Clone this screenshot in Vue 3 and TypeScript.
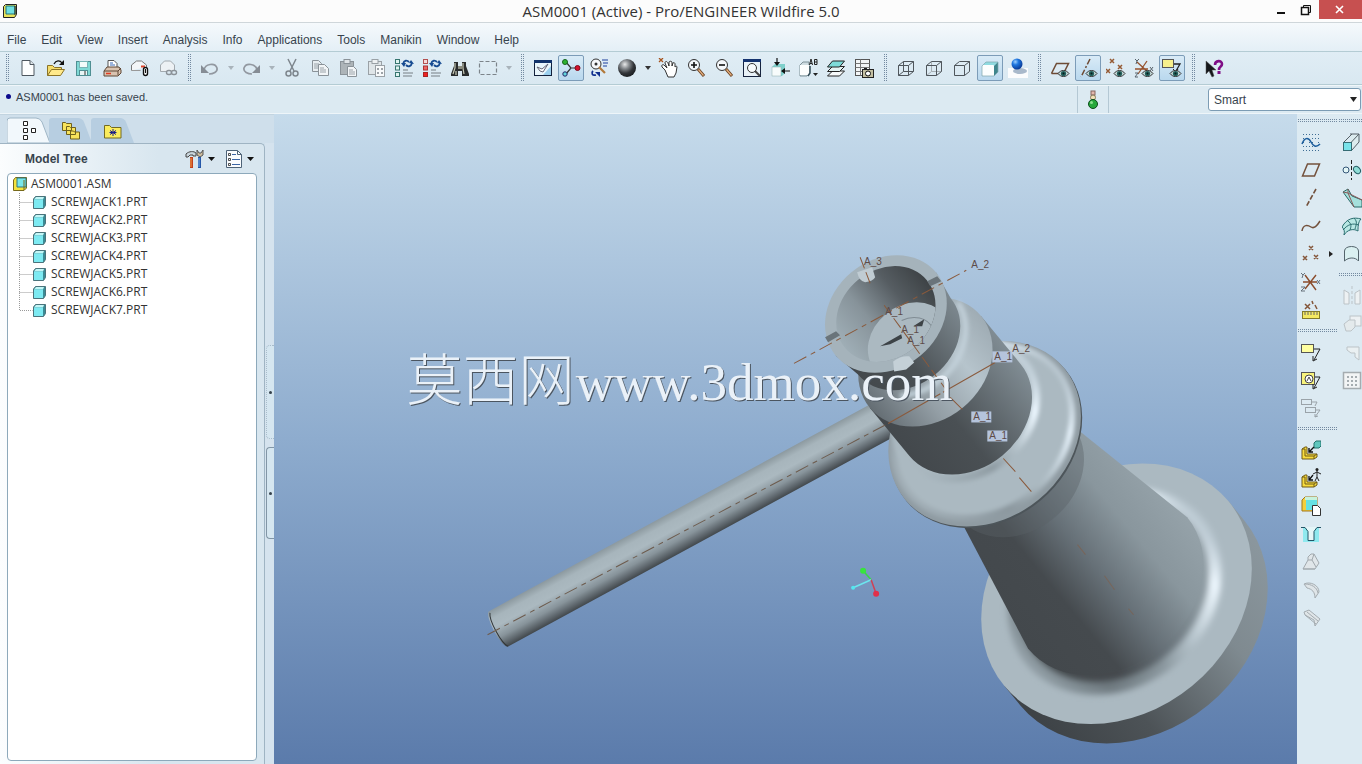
<script setup lang="ts">
import { ref } from 'vue'

interface Tool {
  id: string
  label: string
  active?: boolean
  disabled?: boolean
  caret?: boolean
}

const icons: Record<string, string> = {
  new: '<path d="M4 2.5h8l4 4v11H4z" fill="#fdfefe" stroke="#4d565e"/><path d="M12 2.5v4h4" fill="#dfe6ea" stroke="#4d565e"/>',
  open: '<path d="M1.500 17.500V7.500h5l2 2h7v3" fill="#f4dc6c" stroke="#8b7326"/><path d="M1.500 17.500l4-6h13l-4 6z" fill="#ffe98a" stroke="#8b7326"/><path d="M8 6c2-4 6-4 8-1" fill="none" stroke="#111" stroke-width="1.300"/><path d="M18 2v5h-5z" fill="#111"/>',
  save: '<rect x="2.500" y="3.500" width="14" height="14" fill="#7fd8d5" stroke="#4f8f93"/><rect x="5.500" y="3.500" width="8" height="6" fill="#f4fbfb" stroke="#7ab4b6"/><rect x="5.500" y="12.500" width="8" height="5" fill="#e8f6f6" stroke="#4f8f93"/><path d="M11 13v4" stroke="#333"/>',
  print: '<path d="M6 9V2.500h6l3 3V9" fill="#fff" stroke="#555"/><path d="M8 5h3M8 7h5" stroke="#3a6ab8"/><path d="M2 13l3-4h12l2 3v3l-3 3H2z" fill="#d9c3b0" stroke="#5e4635"/><path d="M2 13h14l3-3M16 13v4" stroke="#5e4635" fill="none"/><path d="M4 15.500h5" stroke="#e13b20" stroke-width="1.500"/>',
  mail: '<path d="M1.500 12.500V7l5-4h5l5 4v2" fill="#f3f6f8" stroke="#777"/><path d="M1.500 12.500h9" fill="none" stroke="#999"/><path d="M11 8.500h4" stroke="#d8432b" stroke-width="2"/><rect x="13.500" y="9.500" width="4" height="8" rx="2" fill="#fff" stroke="#111" stroke-width="1.400"/><path d="M15.500 11v4" stroke="#111"/>',
  link: '<path d="M2.500 13.500V7l4-4h6l4 4v6" fill="#edf1f4" stroke="#a2a9ae"/><path d="M2.500 13.500h6" fill="none" stroke="#a2a9ae"/><rect x="8.500" y="12.500" width="5" height="4" rx="2" fill="none" stroke="#8b9298" stroke-width="1.400"/><rect x="13.500" y="12.500" width="5" height="4" rx="2" fill="none" stroke="#8b9298" stroke-width="1.400"/>',
  undo: '<path d="M4 12C5 6 15 4 17 10c1 4-4 6-8 6" fill="none" stroke="#9298a0" stroke-width="1.700"/><path d="M1 7v8h8z" fill="#868d95"/>',
  redo: '<path d="M16 12C15 6 5 4 3 10c-1 4 4 6 8 6" fill="none" stroke="#9298a0" stroke-width="1.700"/><path d="M19 7v8h-8z" fill="#868d95"/>',
  cut: '<path d="M6 1l6 12M14 1L8 13" stroke="#7e868d" stroke-width="1.500"/><circle cx="6.500" cy="15.500" r="2.500" fill="none" stroke="#7e868d" stroke-width="1.500"/><circle cx="13.500" cy="15.500" r="2.500" fill="none" stroke="#7e868d" stroke-width="1.500"/>',
  copy: '<path d="M2.500 2.500h6l3 3v8h-9z" fill="#e8eef1" stroke="#8a9298"/><path d="M4 6h5M4 8h5M4 10h4" stroke="#9aa2a8"/><path d="M8.500 6.500h6l4 4v7h-10z" fill="#f2f5f7" stroke="#8a9298"/><path d="M10 10h4M10 12h6M10 14h6" stroke="#9aa2a8"/>',
  paste: '<rect x="2.500" y="3.500" width="13" height="13" fill="#adb4b8" stroke="#8a9298"/><rect x="6" y="1.500" width="6" height="4" fill="#dfe4e7" stroke="#8a9298"/><path d="M9.500 8.500h6l3 3v7h-9z" fill="#f2f5f7" stroke="#8a9298"/><path d="M11 12h4M11 14h6M11 16h6" stroke="#9aa2a8"/>',
  pasteList: '<rect x="2.500" y="3.500" width="13" height="13" fill="#dfe5e8" stroke="#9aa1a6"/><rect x="6" y="1.500" width="6" height="4" fill="#eef1f3" stroke="#9aa1a6"/><rect x="9.500" y="7.500" width="9" height="11" fill="#f8fafb" stroke="#9aa1a6"/><path d="M11 11h2M15 11h2M11 15h2M15 15h2" stroke="#7f878d" stroke-width="1.600"/>',
  regen: '<g fill="#dff3f0" stroke="#37756f"><rect x="1.500" y="1.500" width="4" height="4"/><rect x="1.500" y="8" width="4" height="4"/><rect x="1.500" y="14.500" width="4" height="4"/></g><path d="M9 12h5M9 15h10M9 18h9" stroke="#777e84"/><path d="M9 6c1-4 4-4 6-2M18 5c-1 4-4 4-6 2" fill="none" stroke="#164a91" stroke-width="1.800"/><path d="M7 5h5l-2 4zM15 5l2-3 3 4z" fill="#164a91"/>',
  regenMgr: '<rect x="1.500" y="1.500" width="4" height="4" fill="#f6dada" stroke="#b35050"/><rect x="1.500" y="8" width="4" height="4" fill="#e66" stroke="#a33"/><rect x="1.500" y="14.500" width="4" height="4" fill="#e22" stroke="#a22"/><path d="M9 12h5M9 15h10M9 18h9" stroke="#777e84"/><path d="M9 6c1-4 4-4 6-2M18 5c-1 4-4 4-6 2" fill="none" stroke="#164a91" stroke-width="1.800"/><path d="M7 5h5l-2 4zM15 5l2-3 3 4z" fill="#164a91"/>',
  find: '<path d="M4 4h4v4h4V4h4v4l3 8v2h-7v-5H8v5H1v-2l3-8z" fill="#2a2c2c"/><path d="M5 5v5l-2 6M13 5v5l1 6M6 13v4" stroke="#c9cbb8" stroke-width="1.200" fill="none"/><rect x="8" y="8" width="4" height="3" fill="#8b8d80"/>',
  select: '<rect x="1.500" y="3.500" width="17" height="13" fill="none" stroke="#7c848a" stroke-width="1.200" stroke-dasharray="4 2"/>',
  repaint: '<rect x="1.500" y="2.500" width="17" height="15" fill="#eaf6fc" stroke="#13213c"/><rect x="1" y="2" width="18" height="3" fill="#13336b"/><path d="M18 17H10L18 8z" fill="#9cd0ee"/><path d="M4 9l5 2 6-5-5 8-3-1z" fill="#fff" stroke="#667"/>',
  spin: '<path d="M5 4l5 6-5 6M10 10h7" fill="none" stroke="#333" stroke-width="1.200"/><circle cx="4" cy="4" r="2.500" fill="#2cb22f" stroke="#14631a"/><circle cx="16.500" cy="10" r="2.500" fill="#d3122d" stroke="#7f0b1b"/><circle cx="4" cy="16" r="2.200" fill="#63d8dc" stroke="#226"/>',
  orient: '<circle cx="7" cy="6" r="5" fill="#f6f8fb" stroke="#333"/><circle cx="7" cy="6" r="1.500" fill="#333"/><path d="M10 9l6 6" stroke="#b2793a" stroke-width="2.200"/><path d="M13 2h6M14 5h5M14 8h4" stroke="#1c3f9c"/><path d="M4 13c-2 2-1 5 3 4" fill="none" stroke="#102f8e" stroke-width="1.800"/><path d="M6 14h5v5z" fill="#102f8e"/>',
  sphere: '<defs><radialGradient id="ball" cx=".38" cy=".3" r=".7"><stop offset="0" stop-color="#e8e9ea"/><stop offset=".35" stop-color="#85898d"/><stop offset=".7" stop-color="#33363a"/><stop offset="1" stop-color="#1d2023"/></radialGradient></defs><circle cx="10" cy="10" r="9" fill="url(#ball)"/>',
  hand: '<path d="M7 12L4 9c-1-2 1-3 2-2l3 3L7 5c0-2 2-2 3 0l1 3V4c1-1 2-1 3 0v4l1-3c1-1 2 0 2 1v3c1-1 2-1 2 0l-1 6-2 4h-6z" fill="#fff" stroke="#333"/><path d="M1 0l4 4M5 0L1 4" stroke="#a6531d" stroke-width="1.300"/>',
  zoomIn: '<circle cx="8" cy="7" r="5.500" fill="#f4f7fa" stroke="#333"/><path d="M8 4v6M5 7h6" stroke="#111" stroke-width="1.600"/><path d="M12 11l6 7" stroke="#69401f" stroke-width="3"/><path d="M12.500 11.500l5 6" stroke="#e6b182" stroke-width="1.200"/>',
  zoomOut: '<circle cx="8" cy="7" r="5.500" fill="#f4f7fa" stroke="#333"/><path d="M5 7h6" stroke="#111" stroke-width="1.600"/><path d="M12 11l6 7" stroke="#69401f" stroke-width="3"/><path d="M12.500 11.500l5 6" stroke="#e6b182" stroke-width="1.200"/>',
  refit: '<rect x="1.500" y="2.500" width="17" height="16" fill="#e9f2f8" stroke="#16233e"/><rect x="1" y="1" width="18" height="3" fill="#15336f"/><circle cx="10" cy="10" r="4.500" fill="#f8fbfd" stroke="#333"/><path d="M13 13l5 5" stroke="#444" stroke-width="2"/>',
  reorient: '<path d="M2 9l3-3h10v9l-3 3H2z" fill="#7fd0cc"/><rect x="2" y="9" width="9" height="9" fill="#f7fbfb" stroke="#8aa" stroke-width=".5"/><path d="M7 0v5M20 13h-5" stroke="#111" stroke-width="1.200"/><path d="M4 4h6l-3 4zM15 10v6l-4-3z" fill="#111"/>',
  views: '<path d="M2 7l3-3h6v10l-2 4H2z" fill="#d0dde2" stroke="#7d9097"/><rect x="2" y="7" width="9" height="10" fill="#fdfefe"/><path d="M12 8v7l-2 3" stroke="#344c57" fill="none" stroke-width="1.500"/><path d="M11.500 7L13 1l1.500 6M12 5.500h2" stroke="#222" fill="none"/><path d="M16.500 1.500v5h2.500v-5zM16.500 4H19" stroke="#222" fill="none"/><path d="M15 15h5l-2.500 3z" fill="#222"/>',
  layers: '<g stroke="#222" stroke-linejoin="round"><path d="M1.500 18l5-5h12l-5 5z" fill="#f7fafb"/><path d="M1.500 13.500l5-5h12l-5 5z" fill="#e4f3f3"/><path d="M1.500 9l5-6h12l-5 6z" fill="#7ddbd8"/></g>',
  viewMgr: '<rect x="1.500" y="1.500" width="14" height="16" fill="#f4f6f7" stroke="#555"/><path d="M1.500 5.500h14M1.500 9.500h14M1.500 13.500h14M6.500 1.500v16" stroke="#777"/><rect x="8.500" y="11.500" width="11" height="8" fill="#c4c0a2" stroke="#222"/><rect x="10" y="10" width="3" height="2" fill="#222"/><circle cx="14" cy="15.500" r="2.500" fill="#fff" stroke="#111"/>',
  wire: '<path d="M2.500 7.500h10v10h-10zM7.500 3.500h10v10h-10zM2.500 7.500l5-4M12.500 7.500l5-4M2.500 17.500l5-4M12.500 17.500l5-4" fill="none" stroke="#4f565c"/>',
  hidden: '<path d="M7.500 3.500v10h10M2.500 17.500l5-4" fill="none" stroke="#a6aeb3"/><path d="M2.500 7.500h10v10h-10zM2.500 7.500l5-4h10v10l-5 4M12.500 7.500l5-4" fill="none" stroke="#4f565c"/>',
  noHidden: '<path d="M2.500 7.500h10v10h-10zM2.500 7.500l5-4h10v10l-5 4M12.500 7.500l5-4" fill="none" stroke="#4f565c"/>',
  shaded: '<path d="M2 8l4-4h12l-4 4z" fill="#8fdbe0"/><path d="M14 8l4-4v10l-4 4z" fill="#3f868d"/><rect x="2" y="7" width="12" height="11" rx="1" fill="#fbfefe"/><path d="M2 18V8l4-4h12v10l-4 4z" fill="none" stroke="#7fa6ae" stroke-width=".7"/>',
  enhanced: '<defs><radialGradient id="blueBall" cx=".35" cy=".3" r=".7"><stop offset="0" stop-color="#9fd0ff"/><stop offset=".4" stop-color="#1f77e0"/><stop offset="1" stop-color="#0a3c99"/></radialGradient></defs><rect x="0" y="10" width="20" height="10" fill="#fbfcfd"/><ellipse cx="12" cy="13" rx="7" ry="3" fill="#a9b9cb"/><circle cx="9" cy="6" r="5.500" fill="url(#blueBall)"/>',
  planeEye: '<path d="M1.500 15.500l5-10h12l-4 8" fill="none" stroke="#6e4b35" stroke-width="1.500"/><path d="M1.500 15.500h8" stroke="#6e4b35" stroke-width="1.500"/>',
  axisEye: '<path d="M12 1L3 19" stroke="#6e4b35" stroke-width="1.500" stroke-dasharray="6 2 2 2"/>',
  pointsEye: '<g stroke="#955a34" stroke-width="1.500"><path d="M4 1l4 4M8 1L4 5M12 7l4 4M16 7l-4 4M0 11l4 4M4 11l-4 4"/></g>',
  csysEye: '<path d="M3 4l12 11M1 11h13M13 3L4 16" stroke="#96522e" stroke-width="1.300"/><path d="M1 1l2 2 2-2M3 3l-1 3M16 9l3 4M19 9l-3 4M1 15h3l-3 4h3" stroke="#59636b" fill="none"/>',
  noteEye: '<rect x="0.500" y="1.500" width="11" height="8" fill="#f7f08c" stroke="#555"/><path d="M12 6h6l-4 7" fill="none" stroke="#222" stroke-width="1.300"/><path d="M11 11l3 3 2-3" fill="none" stroke="#222"/>',
  help: '<path d="M2 3v13l3-3 3 6 2-1-2-6h4z" fill="#15171a" stroke="#555" stroke-width=".5"/><path d="M11 7c0-5 7-5 7-1 0 3-3 2-3 6" fill="none" stroke="#7f0e86" stroke-width="2.600"/><rect x="13.500" y="13" width="3" height="3" fill="#7f0e86"/>',
  sketch: '<g fill="#3f6d94"><path d="M2 2h1v1H2zM5 2h1v1H5zM8 2h1v1H8zM11 2h1v1h-1zM14 2h1v1h-1zM17 2h1v1h-1zM2 6h1v1H2zM5 6h1v1H5zM11 6h1v1h-1zM14 6h1v1h-1zM17 6h1v1h-1zM2 10h1v1H2zM8 10h1v1H8zM11 10h1v1h-1zM17 10h1v1h-1zM2 14h1v1H2zM5 14h1v1H5zM8 14h1v1H8zM11 14h1v1h-1zM14 14h1v1h-1zM2 18h1v1H2zM5 18h1v1H5zM8 18h1v1H8zM11 18h1v1h-1zM14 18h1v1h-1zM17 18h1v1h-1z"/></g><path d="M1 12C4 4 8 6 10 10s5 6 9 2" fill="none" stroke="#1e5f9e" stroke-width="1.600"/>',
  plane: '<path d="M1.500 16l5-12h12l-5 12z" fill="none" stroke="#73513c" stroke-width="1.500"/>',
  axis: '<path d="M15 1L5 19" stroke="#73513c" stroke-width="1.600" stroke-dasharray="5 2"/>',
  curve: '<path d="M1 15c1-7 6-6 9-4s6-1 9-6" fill="none" stroke="#73513c" stroke-width="1.500"/>',
  points: '<g stroke="#84563a" stroke-width="1.500"><path d="M8 2l4 4M12 2L8 6M2 12l4 4M6 12l-4 4M13 11l4 4M17 11l-4 4"/></g>',
  csys: '<path d="M4 3l11 15M2 10h14M15 3L4 17" stroke="#8b4c2c" stroke-width="1.400"/><path d="M0 1l2 2 2-2M2 3l-1 3M16 8l3 4M19 8l-3 4M0 15h4l-4 4h4" stroke="#66707a" fill="none"/>',
  measure: '<path d="M4 4l5 5M9 4L4 9M11 1l1 3M14 5l2 4" stroke="#84563a" stroke-width="1.500"/><rect x="1.500" y="11.500" width="17" height="7" fill="#f4ea62" stroke="#837c2a"/><path d="M4 12v3M7 12v3M10 12v3M13 12v3M16 12v3" stroke="#666"/>',
  note: '<rect x="0.500" y="2.500" width="12" height="8" fill="#ffffa0" stroke="#555"/><path d="M13 7h6l-6 11" fill="none" stroke="#222"/><path d="M12 14v5l4-2" fill="none" stroke="#222"/>',
  noteBalloon: '<rect x="0.500" y="2.500" width="13" height="12" fill="#f8f37c" stroke="#555"/><circle cx="8" cy="9" r="4" fill="#fff" stroke="#444"/><path d="M6 11l2-4 2 4" stroke="#444" fill="none"/><path d="M14 7h5l-6 11M12 14v5l4-2" fill="none" stroke="#222"/>',
  noteStack: '<g fill="none" stroke="#9aa3a9"><rect x="0.500" y="1.500" width="10" height="5"/><rect x="4.500" y="9.500" width="10" height="5"/><path d="M11 4h5l-2 4M15 12h4l-5 7M14 16v3l3-1"/></g>',
  addPart: '<path d="M1 9l3-2h2v7h10v3l-3 2H1z" fill="#f8dc3d" stroke="#6f5b16"/><path d="M1 9h3v7h9v3M13 16l3-2" fill="none" stroke="#6f5b16"/><path d="M13 3l2-2h5v5l-2 2h-5z" fill="#5fc6bd" stroke="#25736d"/><path d="M13 7l-5 5M8 8v4h4" fill="none" stroke="#111" stroke-width="1.400"/>',
  addManikin: '<path d="M1 9l3-2h2v7h10v3l-3 2H1z" fill="#f8dc3d" stroke="#6f5b16"/><path d="M1 9h3v7h9v3M13 16l3-2" fill="none" stroke="#6f5b16"/><path d="M16 2v7l-2 4M16 9l2 4M12 6l4-2 4 2" stroke="#222" fill="none"/><circle cx="16" cy="1.500" r="1.500" fill="#222"/><path d="M12 7l-4 5M8 8v4h4" fill="none" stroke="#111" stroke-width="1.300"/>',
  create: '<path d="M1 4l3-3h12v11l-3 3H1z" fill="#f5cf3e" stroke="#a1791b"/><path d="M5 4h11v8l-3 2H5z" fill="#67e1e4"/><path d="M4 1h12v3H4z" fill="#c7f3dd"/><path d="M11.500 9.500h5l3 3v7h-8z" fill="#fff" stroke="#333"/>',
  hole: '<rect x="2" y="4" width="16" height="14" fill="#8fe9ef"/><path d="M4 3l3 4v9h6V7l3-4" fill="#e5f6f8"/><path d="M0 3.500h4l3 4v9h6v-9l3-4h4" fill="none" stroke="#256"/>',
  extrudeCut: '<path d="M2 17l5-9V5l3-3h3l5 9-4 6zM7 8h4l4 7M13 2l-2 6M2 17h12" fill="#e0e6e9" stroke="#a1a9ae"/>',
  round: '<path d="M3 4c6-3 15 1 15 8l-4 6c0-6-3-9-8-10zM4 4c6 0 12 3 13 9" fill="#dfe5e8" stroke="#a4acb1"/>',
  chamfer: '<path d="M3 4l5-2 11 9-5 7-1-6-9-5zM6 4l11 9M4 7l11 9" fill="#dfe5e8" stroke="#a4acb1"/>',
  extrude: '<path d="M8 2h9v8L10 18" fill="#dcebee" stroke="#555f66"/><path d="M1.500 10.500L10 2M9 10.500L17 2" stroke="#555f66"/><rect x="1.500" y="10.500" width="8" height="8" fill="#79e3ea" stroke="#356c74"/>',
  revolve: '<path d="M9.500 0v20" stroke="#222" stroke-dasharray="4 2"/><circle cx="4" cy="10" r="3" fill="#e3f6f6" stroke="#357"/><ellipse cx="15" cy="10" rx="4" ry="3" transform="rotate(50 15 10)" fill="#8fdcd6" stroke="#265f66"/>',
  sweep: '<path d="M1 4l5-3 4 7 10 4v7h-8z" fill="#a5e0dc" stroke="#286a68"/><path d="M6 5l6 14M6 5l14 7M1 4l5 1V1" fill="none" stroke="#8a5a5a"/>',
  boundary: '<path d="M0 11C5 2 12 1 19 3c-3 3-3 8-3 12C11 12 5 14 2 19 3 15 2 13 0 11z" fill="#b8e8e4" stroke="#2b6e70"/><path d="M6 5c4 3 3 6 2 9M12 2c4 4 2 7 1 11M1 14c5-6 10-7 16-5" fill="none" stroke="#2b6e70"/>',
  fill: '<path d="M2.500 17V7c0-6 14-6 14 0v10c-3-4-10-4-14 0z" fill="#daf0f1" stroke="#54646c"/>',
  mirror: '<path d="M10 0v20" stroke="#bcc3c7" stroke-dasharray="3 2"/><path d="M2 4l5 3v11H2zM18 4l-5 3v11h5z" fill="#edf1f3" stroke="#bcc3c7"/>',
  merge: '<rect x="8" y="2" width="11" height="10" fill="#edf1f3" stroke="#bcc3c7"/><path d="M2 10l5-4h6v7l-4 4H4z" fill="#e4eaec" stroke="#bcc3c7"/>',
  trim: '<path d="M5 5h12v13l-4-3v-4H9L5 8z" fill="#eaf0f2" stroke="#bcc3c7"/>',
  pattern: '<rect x="1.500" y="2.500" width="17" height="16" fill="#f2f4f5" stroke="#a5acb0" stroke-width="1.500"/><g fill="#a5acb0"><path d="M5 6h2v2H5zM9 6h2v2H9zM13 6h2v2h-2zM5 10h2v2H5zM9 10h2v2H9zM13 10h2v2h-2zM5 14h2v2H5zM9 14h2v2H9zM13 14h2v2h-2z"/></g>',
}

const eye =
  '<path d="M8 15.500c3-4 8-4 11 0-3 4-8 4-11 0z" fill="#c3d6d6" stroke="#333"/><circle cx="13.500" cy="15.500" r="2.600" fill="#23605c"/><circle cx="13.500" cy="15.500" r="1" fill="#071c1c"/>'
for (const id of ['planeEye', 'axisEye', 'pointsEye', 'csysEye', 'noteEye']) icons[id] += eye

const menus = ['File', 'Edit', 'View', 'Insert', 'Analysis', 'Info', 'Applications', 'Tools', 'Manikin', 'Window', 'Help']

const toolGroups: Tool[][] = [
  [
    { id: 'new', label: 'New' },
    { id: 'open', label: 'Open' },
    { id: 'save', label: 'Save' },
    { id: 'print', label: 'Print' },
    { id: 'mail', label: 'Mail as attachment' },
    { id: 'link', label: 'Mail link', disabled: true },
  ],
  [
    { id: 'undo', label: 'Undo', disabled: true, caret: true },
    { id: 'redo', label: 'Redo', disabled: true, caret: true },
    { id: 'cut', label: 'Cut', disabled: true },
    { id: 'copy', label: 'Copy', disabled: true },
    { id: 'paste', label: 'Paste', disabled: true },
    { id: 'pasteList', label: 'Paste special', disabled: true },
    { id: 'regen', label: 'Regenerate' },
    { id: 'regenMgr', label: 'Regeneration manager' },
    { id: 'find', label: 'Find' },
    { id: 'select', label: 'Select box', disabled: true, caret: true },
  ],
  [
    { id: 'repaint', label: 'Repaint' },
    { id: 'spin', label: 'Spin center', active: true },
    { id: 'orient', label: 'Orient mode' },
    { id: 'sphere', label: 'Appearance gallery', caret: true },
    { id: 'hand', label: 'Pan' },
    { id: 'zoomIn', label: 'Zoom in' },
    { id: 'zoomOut', label: 'Zoom out' },
    { id: 'refit', label: 'Refit' },
    { id: 'reorient', label: 'Reorient' },
    { id: 'views', label: 'Saved views' },
    { id: 'layers', label: 'Layers' },
    { id: 'viewMgr', label: 'View manager' },
  ],
  [
    { id: 'wire', label: 'Wireframe' },
    { id: 'hidden', label: 'Hidden line' },
    { id: 'noHidden', label: 'No hidden' },
    { id: 'shaded', label: 'Shading', active: true },
    { id: 'enhanced', label: 'Enhanced realism' },
  ],
  [
    { id: 'planeEye', label: 'Plane display' },
    { id: 'axisEye', label: 'Axis display', active: true },
    { id: 'pointsEye', label: 'Point display' },
    { id: 'csysEye', label: 'Coordinate system display' },
    { id: 'noteEye', label: 'Annotation display', active: true },
  ],
  [{ id: 'help', label: 'Context help' }],
]

const sideLeft = [
  ['sketch', 'plane', 'axis', 'curve', 'points', 'csys', 'measure'],
  ['note', 'noteBalloon', 'noteStack'],
  ['addPart', 'addManikin', 'create', 'hole', 'extrudeCut', 'round', 'chamfer'],
]
const sideRight = [
  ['extrude', 'revolve', 'sweep', 'boundary', 'fill'],
  ['mirror', 'merge', 'trim', 'pattern'],
]

const parts = [1, 2, 3, 4, 5, 6, 7].map((n) => `SCREWJACK${n}.PRT`)
const filter = ref('Smart')

const axisLabels = [
  { x: 864, y: 266, t: 'A_3' },
  { x: 971, y: 269, t: 'A_2' },
  { x: 885, y: 316, t: 'A_1' },
  { x: 901, y: 334, t: 'A_1' },
  { x: 907, y: 345, t: 'A_1' },
  { x: 1012, y: 353, t: 'A_2' },
  { x: 994, y: 361, t: 'A_1', box: true },
  { x: 973, y: 421, t: 'A_1', box: true },
  { x: 989, y: 440, t: 'A_1', box: true },
]
</script>

<template>
  <div class="app">
    <header class="titlebar">
      <svg class="app-icon" width="16" height="16" viewBox="0 0 16 16" aria-hidden="true">
        <path d="M1.500 3.500l2-2h11v10l-2 3h-11z" fill="#e9e25a" stroke="#222" />
        <path d="M4 3h9v8H4z" fill="#6fe0e2" stroke="#277" />
        <path d="M13 3v9" stroke="#222" />
      </svg>
      <h1>ASM0001 (Active) - Pro/ENGINEER Wildfire 5.0</h1>
      <div class="window-buttons">
        <button aria-label="Minimize"><svg width="12" height="12"><path d="M2 9h8" stroke="#111" stroke-width="2" /></svg></button>
        <button aria-label="Restore">
          <svg width="12" height="12" fill="none" stroke="#111"><path d="M1.500 3.500h7v7h-7z" stroke-width="1.500" /><path d="M3.500 3V1.500h7v7H9" /></svg>
        </button>
        <button class="close" aria-label="Close"><svg width="10" height="10"><path d="M1 1l7 7M8 1L1 8" stroke="#fff" stroke-width="1.600" /></svg></button>
      </div>
    </header>

    <nav class="menubar">
      <button v-for="m in menus" :key="m">{{ m }}</button>
    </nav>

    <div class="toolbar" role="toolbar" aria-label="Main">
      <template v-for="(group, g) in toolGroups" :key="g">
        <span class="grip"></span>
        <template v-for="tool in group" :key="tool.id">
          <button class="tool" :class="{ active: tool.active }" :aria-label="tool.label" :disabled="tool.disabled">
            <svg width="20" height="20" viewBox="0 0 20 20" v-html="icons[tool.id]"></svg>
          </button>
          <button v-if="tool.caret" class="caret" :aria-label="tool.label + ' options'" :disabled="tool.disabled">
            <svg width="6" height="4" viewBox="0 0 6 4"><path d="M0 0h6L3 4z" fill="currentColor" /></svg>
          </button>
        </template>
      </template>
    </div>

    <div class="message-row">
      <p><i class="bullet"></i>ASM0001 has been saved.</p>
      <div class="signal">
        <svg width="12" height="20" viewBox="0 0 12 20" aria-hidden="true">
          <rect x="4" y="1" width="4" height="4" fill="#e3b6ac" stroke="#85665f" />
          <circle cx="6" cy="7.500" r="2.500" fill="#f2e0b8" stroke="#887958" />
          <circle cx="6" cy="14" r="4.500" fill="#27a83b" stroke="#0c4d1c" />
          <circle cx="4.500" cy="12.500" r="1.500" fill="#8be08e" />
        </svg>
      </div>
      <div class="filter">
        <select v-model="filter" aria-label="Selection filter">
          <option>Smart</option>
        </select>
        <svg width="7" height="5" viewBox="0 0 7 5" aria-hidden="true"><path d="M0 0h7L3.500 5z" fill="#222" /></svg>
      </div>
    </div>

    <main class="workspace">
      <aside class="navigator">
        <div class="tabs" role="tablist">
          <button class="tab current" role="tab" aria-label="Model tree">
            <svg class="tab-shape" viewBox="0 0 44 26" preserveAspectRatio="none"><path d="M0 26V4q0-3 3-3h26q4 0 6 4l8 21z" /></svg>
            <svg class="tab-icon" width="20" height="20" viewBox="0 0 20 20" fill="#fff" stroke="#222">
              <path d="M4.500 1.500h4v4h-4zM4.500 8.500h4v4h-4zM4.500 15.500h4v4h-4zM12.500 8.500h4v4h-4z" />
            </svg>
          </button>
          <button class="tab" role="tab" aria-label="Folder browser">
            <svg class="tab-shape" viewBox="0 0 44 26" preserveAspectRatio="none"><path d="M0 26V4q0-3 3-3h26q4 0 6 4l8 21z" /></svg>
            <svg class="tab-icon" width="20" height="20" viewBox="0 0 20 20" fill="#f8e35b" stroke="#6e601c">
              <path d="M1.500 10.500v-8h3l1 1h5v7zM5.500 14.500v-8h3l1 1h5v7zM9.500 19v-8h3l1 1h5v7z" />
            </svg>
          </button>
          <button class="tab" role="tab" aria-label="Favorites">
            <svg class="tab-shape" viewBox="0 0 44 26" preserveAspectRatio="none"><path d="M0 26V4q0-3 3-3h26q4 0 6 4l8 21z" /></svg>
            <svg class="tab-icon" width="20" height="20" viewBox="0 0 20 20">
              <path d="M1.500 18V5.500h5l2 2h9.500V18z" fill="#fbec5c" stroke="#746a22" />
              <path d="M10 9v7M7 10.500l6 4M13 10.500l-6 4M6.500 12.500h7" stroke="#1b1e87" />
            </svg>
          </button>
        </div>
        <section class="panel">
          <div class="panel-head">
            <h2>Model Tree</h2>
            <button aria-label="Settings">
              <svg width="20" height="20" viewBox="0 0 20 20">
                <path d="M1 8V5c3-3 8-3 10-1v3H8V6H5L3 8z" fill="#c9d5dc" stroke="#444" />
                <path d="M6.500 8v11" stroke="#c1401d" stroke-width="3" /><path d="M6 9v9" stroke="#f5a04a" />
                <path d="M14.500 8v11" stroke="#2557a8" stroke-width="3" /><path d="M14 9v9" stroke="#7fb2ee" />
                <path d="M12 1v5l3 2 3-2V1l-2 3h-2z" fill="#cdbc9d" stroke="#555" />
              </svg>
            </button>
            <button class="drop" aria-label="Settings menu"><svg width="7" height="4"><path d="M0 0h7L3.500 4z" fill="#111" /></svg></button>
            <button aria-label="Show">
              <svg width="20" height="20" viewBox="0 0 20 20">
                <path d="M2.500 1.500h11l4 4v13h-15z" fill="#fafcfe" stroke="#4d6277" />
                <path d="M13.500 1.500v4h4" fill="none" stroke="#4d6277" />
                <path d="M8 5.500h4M8 10.500h8M8 15.500h8" stroke="#3c66a5" />
                <path d="M4.500 4.500h2v2h-2zM4.500 9.500h2v2h-2zM4.500 14.500h2v2h-2z" fill="none" stroke="#222" stroke-width=".8" />
              </svg>
            </button>
            <button class="drop" aria-label="Show menu"><svg width="7" height="4"><path d="M0 0h7L3.500 4z" fill="#111" /></svg></button>
          </div>
          <div class="tree">
            <div class="node root">
              <svg width="14" height="14" viewBox="0 0 14 14">
                <path d="M.5 3l2-2.500h11V11l-2.500 2.500H.5z" fill="#f4e33d" stroke="#77691b" />
                <path d="M4 1h9v9H4z" fill="#78e6ea" stroke="#33777c" /><path d="M11 3v10" stroke="#77691b" />
              </svg>
              <span>ASM0001.ASM</span>
            </div>
            <ul>
              <li v-for="(part, i) in parts" :key="part" class="node">
                <svg class="guide" width="14" height="18" viewBox="0 0 14 18" aria-hidden="true">
                  <path :d="i === parts.length - 1 ? 'M.5 0v9.500h13' : 'M.5 0v18M.5 9.500h13'" />
                </svg>
                <svg width="13" height="13" viewBox="0 0 13 13">
                  <path d="M.5 3l2-2.500h10v9l-2 3H.5z" fill="#3a8b95" stroke="#4b737b" />
                  <path d="M1 3.500l2-2.500h8L10 3.500z" fill="#c3f6f6" /><path d="M1 3.500h9V12H1z" fill="#7deaf2" />
                </svg>
                <span>{{ part }}</span>
              </li>
            </ul>
          </div>
        </section>
        <div class="sash">
          <button class="handle faint" aria-label="Collapse navigator"><i></i></button>
          <button class="handle" aria-label="Expand browser"><i></i></button>
        </div>
      </aside>

      <section class="canvas">
        <svg viewBox="274 115 1023 649" preserveAspectRatio="xMidYMid slice" role="img" aria-label="Screw jack assembly">
          <defs>
            <linearGradient id="bg" x1="0" y1="0" x2="0" y2="1">
              <stop offset="0" stop-color="#c6dbeb" />
              <stop offset=".5" stop-color="#8eacce" />
              <stop offset="1" stop-color="#5b7bab" />
            </linearGradient>
            <linearGradient id="rod" x1="0" y1="0" x2="0" y2="1">
              <stop offset="0" stop-color="#8c999f" />
              <stop offset=".2" stop-color="#a7b5bc" />
              <stop offset=".42" stop-color="#abb9c0" />
              <stop offset=".7" stop-color="#87939a" />
              <stop offset=".9" stop-color="#596167" />
              <stop offset="1" stop-color="#42484c" />
            </linearGradient>
            <linearGradient id="side">
              <stop offset="0" stop-color="#43484c" />
              <stop offset=".28" stop-color="#454a4e" />
              <stop offset=".5" stop-color="#667077" />
              <stop offset=".75" stop-color="#89969d" />
              <stop offset="1" stop-color="#95a2a9" />
            </linearGradient>
            <linearGradient id="sideDark">
              <stop offset="0" stop-color="#43484c" />
              <stop offset=".4" stop-color="#4a5054" />
              <stop offset="1" stop-color="#808c93" />
            </linearGradient>
            <linearGradient id="base">
              <stop offset="0" stop-color="#3d4246" />
              <stop offset=".3" stop-color="#4d5357" />
              <stop offset=".7" stop-color="#7f8a90" />
              <stop offset="1" stop-color="#8b979e" />
            </linearGradient>
            <linearGradient id="bore">
              <stop offset="0" stop-color="#9faeb6" />
              <stop offset=".35" stop-color="#87939a" />
              <stop offset=".7" stop-color="#565d62" />
              <stop offset="1" stop-color="#3e4346" />
            </linearGradient>
            <linearGradient id="bevel">
              <stop offset="0" stop-color="#646d73" />
              <stop offset=".35" stop-color="#949fa6" />
              <stop offset=".7" stop-color="#b6c4cc" />
              <stop offset="1" stop-color="#9facb4" />
            </linearGradient>
            <linearGradient id="shine">
              <stop offset="0" stop-color="#8d9aa1" />
              <stop offset=".2" stop-color="#6f7a80" />
              <stop offset=".45" stop-color="#8a979e" />
              <stop offset=".65" stop-color="#b9c7cf" />
              <stop offset=".88" stop-color="#eef8ff" />
              <stop offset="1" stop-color="#bccad3" />
            </linearGradient>
            <linearGradient id="collarShine">
              <stop offset="0" stop-color="#abb9c1" />
              <stop offset=".4" stop-color="#8f9ca3" />
              <stop offset=".6" stop-color="#b3c1c9" />
              <stop offset=".85" stop-color="#ecf7ff" />
              <stop offset="1" stop-color="#bfcdd6" />
            </linearGradient>
            <linearGradient id="edge">
              <stop offset="0" stop-color="#a1aeb6" />
              <stop offset=".35" stop-color="#8b979e" />
              <stop offset=".6" stop-color="#b2c0c8" />
              <stop offset=".85" stop-color="#e6f2fb" />
              <stop offset="1" stop-color="#b7c5ce" />
            </linearGradient>
            <filter id="soft" x="-20%" y="-20%" width="140%" height="140%"><feGaussianBlur stdDeviation="3" /></filter>
            <filter id="soft2" x="-20%" y="-20%" width="140%" height="140%"><feGaussianBlur stdDeviation="2" /></filter>
            <clipPath id="boreClip"><ellipse cx="0" cy="-362" rx="53" ry="44" /></clipPath>
            <clipPath id="baseClip"><ellipse rx="145" ry="119" /></clipPath>
            <clipPath id="flangeClip"><ellipse cy="-207" rx="103" ry="85" /></clipPath>
          </defs>

          <rect x="274" y="115" width="1023" height="649" fill="url(#bg)" />

          <g transform="translate(499 629) rotate(-28.500)">
            <path d="M0-20H440V20H0A5 20 0 0 1 0-20z" fill="url(#rod)" />
            <path d="M0-18A5 20 0 0 0 0 20" fill="none" stroke="#2f3437" />
          </g>

          <g transform="translate(1116 594) rotate(-39.500)">
            <path d="M-145 0V25A145 119 0 0 0 145 25V0z" fill="url(#base)" />
            <ellipse rx="145" ry="119" fill="#abb9c1" />
            <g clip-path="url(#baseClip)">
              <ellipse cy="-3" rx="108" ry="89" fill="url(#side)" stroke="url(#shine)" stroke-width="12" filter="url(#soft)" />
            </g>
            <path d="M-73-158L-103-14A103 84 0 0 0 103-14L73-158z" fill="url(#side)" />
            <path d="M-73-190V-158A73 60 0 0 0 73-158V-190z" fill="#596167" fill-opacity=".4" />

            <ellipse cy="-205" rx="103" ry="85" fill="#4d555a" />
            <ellipse cy="-207" rx="103" ry="85" fill="#8f9ba2" />
            <g clip-path="url(#flangeClip)">
              <ellipse cy="-210" rx="96" ry="79" fill="#abb9c1" stroke="url(#edge)" stroke-width="6" filter="url(#soft2)" />
              <ellipse cy="-237" rx="76" ry="62" fill="none" stroke="url(#collarShine)" stroke-width="8" filter="url(#soft2)" />
            </g>
            <path d="M-72-300V-238A72 59 0 0 0 72-238V-300z" fill="url(#sideDark)" />
            <ellipse cy="-300" rx="72" ry="59" fill="url(#bevel)" />
            <ellipse cy="-330" rx="63" ry="53" fill="none" stroke="#c3d1da" stroke-width="5" stroke-dasharray="130 400" stroke-dashoffset="-5" filter="url(#soft2)" />
            <path d="M-65-362L-60-333A60 49 0 0 0 60-333L65-362z" fill="url(#sideDark)" />
            <ellipse cy="-362" rx="65" ry="54" fill="#a5b3bb" />
            <ellipse cy="-362" rx="53" ry="44" fill="url(#bore)" />
            <g clip-path="url(#boreClip)">
              <ellipse cy="-326" rx="44" ry="36" fill="#abb9c1" />
              <path d="M8-347A27 22 0 0 1 27-322" fill="none" stroke="#808c94" />
            </g>
          </g>

          <g>
            <path d="M857 273q2 9 8 10 8-1 10-5l-3-10z" fill="#c0ccd3" />
            <path d="M927 282l10-5 4 5-11 5zM825 338l11-6 4 4-12 7z" fill="#6a747a" />
            <path d="M893 362q8-6 16-5l5 6-8 7-12 2z" fill="#c4d0d7" />
            <path d="M880 347l21-12 1 4-12 6zM913 327l11-7-2 7z" fill="#3d4347" />
          </g>

          <g fill="none" stroke="#8a5a3c">
            <path d="M794 364L966 271" stroke-dasharray="14 5 5 5" />
            <path d="M488 635L888 424" stroke="#6d5b4d" stroke-dasharray="14 5 5 5" />
            <path d="M888 424L1002 359" stroke-dasharray="60 3" />
            <path d="M860 258l10 26M884 306l66 90" stroke-dasharray="12 4" />
            <path d="M950 398l12 12M1003 459l12 13M1019 478l12 14" />
            <path d="M1077 545l8 10M1104 576l10 14M1128 609l5 6" stroke-opacity=".5" />
          </g>

          <g class="axis-labels">
            <template v-for="(a, i) in axisLabels" :key="i">
              <rect v-if="a.box" :x="a.x - 2" :y="a.y - 9" width="20" height="11" fill="#b5c4dc" />
              <text :x="a.x" :y="a.y">{{ a.t }}</text>
            </template>
          </g>

          <g stroke-width="1.500">
            <path d="M871 580l-8-9" stroke="#35d943" /><path d="M871 580l-18 8" stroke="#6ce6ee" /><path d="M871 580l5 14" stroke="#cf4055" />
            <circle cx="863" cy="571" r="3" fill="#38e43d" /><circle cx="853" cy="588" r="2" fill="#55e6ee" /><circle cx="876" cy="594" r="3" fill="#e23049" />
          </g>

          <g class="watermark">
            <text x="407" y="401" class="han">莫西网</text>
            <text x="576" y="401">www.3dmox.com</text>
          </g>
        </svg>
      </section>

      <aside class="feature-bars">
        <div class="feature-bar">
          <template v-for="(group, g) in sideLeft" :key="g">
            <span class="hgrip"></span>
            <div v-for="id in group" :key="id" class="feature">
              <button class="tool" :aria-label="id"><svg width="20" height="20" viewBox="0 0 20 20" v-html="icons[id]"></svg></button>
              <svg v-if="id === 'points'" width="4" height="6" aria-hidden="true"><path d="M0 0l4 3-4 3z" fill="#222" /></svg>
            </div>
          </template>
        </div>
        <div class="feature-bar second">
          <template v-for="(group, g) in sideRight" :key="g">
            <span class="hgrip"></span>
            <div v-for="id in group" :key="id" class="feature">
              <button class="tool" :aria-label="id"><svg width="20" height="20" viewBox="0 0 20 20" v-html="icons[id]"></svg></button>
            </div>
          </template>
        </div>
      </aside>
    </main>
  </div>
</template>

<style>
body {
  margin: 0;
  overflow: hidden;
}
</style>

<style scoped>
.app {
  display: flex;
  flex-direction: column;
  height: 100vh;
  background: #dceaf2;
  color: #37434d;
  font: 12px/16px "Liberation Sans", Arial, sans-serif;
}
button {
  display: flex;
  align-items: center;
  justify-content: center;
  margin: 0;
  padding: 0;
  border: 0;
  background: none;
  color: inherit;
  font: inherit;
}
h1,
h2,
p,
ul {
  margin: 0;
  padding: 0;
}
.titlebar {
  display: grid;
  grid-template-columns: 94px 1fr 94px;
  flex: none;
  height: 22px;
  background: #fcfcfc;
  border-bottom: 1px solid #cfd6da;
}
.app-icon {
  margin: 3px 0 0 2px;
}
h1 {
  color: #333;
  font: 400 15px/22px "Open Sans", "Noto Sans", sans-serif;
  text-align: center;
}
.window-buttons {
  display: flex;
  justify-content: flex-end;
  height: 19px;
}
.window-buttons button {
  width: 26px;
}
.window-buttons .close {
  width: 44px;
  background: #c75050;
}
.menubar {
  display: flex;
  flex: none;
  gap: 15px;
  height: 28px;
  padding: 6px 7px 0;
  box-sizing: border-box;
  background: linear-gradient(#f5f9fc, #e4eff6);
}
.toolbar {
  display: flex;
  flex: none;
  align-items: center;
  height: 32px;
  border-top: 1px solid #b4ccd4;
  border-bottom: 1px solid #b4ccd4;
  background: linear-gradient(#e0edf5, #d9e8f1);
}
.grip {
  width: 4px;
  height: 28px;
  margin: 0 5px;
  background: conic-gradient(#7389a0 25%, transparent 0) 0 0 / 2px 2px;
}
.tool {
  flex: none;
  width: 28px;
  height: 28px;
}
.tool.active {
  width: 26px;
  height: 26px;
  margin: 0 1px;
  box-sizing: border-box;
  border: 1px solid #7c9cb8;
  border-radius: 2px;
  background: linear-gradient(#d9ebf7, #b9d8ee);
}
.caret {
  width: 13px;
  height: 28px;
  color: #333;
}
.caret:disabled {
  color: #a9b3bb;
}
.message-row {
  display: flex;
  flex: none;
  height: 29px;
  border-top: 1px solid #f0f6fa;
  border-bottom: 1px solid #eef5f9;
  box-sizing: border-box;
}
.message-row p {
  flex: 1;
  display: flex;
  align-items: center;
  gap: 5px;
  height: 21px;
  padding-left: 6px;
  font-size: 11px;
}
.bullet {
  width: 5px;
  height: 5px;
  border-radius: 50%;
  background: #0a0a8c;
}
.signal {
  display: flex;
  align-items: center;
  justify-content: center;
  width: 30px;
  border-left: 1px solid #b4c8d4;
  border-right: 1px solid #b4c8d4;
}
.filter {
  display: flex;
  align-items: center;
  width: 154px;
  margin-left: 99px;
}
.filter select {
  width: 153px;
  height: 23px;
  padding: 0 5px;
  border: 1px solid #7c9cb4;
  border-radius: 3px;
  appearance: none;
  background: #fff;
  color: #37434d;
  font: inherit;
}
.filter svg {
  flex: none;
  margin-left: -11px;
  pointer-events: none;
}
.workspace {
  display: flex;
  flex: 1;
  min-height: 0;
}
.navigator {
  display: grid;
  grid-template: 28px 1fr / 265px 9px;
  flex: none;
  border-top: 1px solid #c2d4e0;
  box-sizing: border-box;
  background: #cfdfeb;
}
.tabs {
  display: flex;
  grid-column: 1 / 3;
  align-items: flex-end;
  padding-left: 8px;
}
.tab {
  display: grid;
  width: 42px;
  height: 26px;
}
.tab > svg {
  grid-area: 1 / 1;
}
.tab-shape {
  width: 44px;
  height: 26px;
  fill: #b7cee1;
}
.tab.current .tab-shape {
  fill: #f2f8fc;
  stroke: #9fb6c6;
}
.tab-icon {
  place-self: center;
}
.panel {
  display: flex;
  flex-direction: column;
  min-height: 0;
  padding: 0 7px 3px;
  border-top: 1px solid #9fb4c3;
  border-right: 1px solid #9fb4c3;
  border-radius: 0 5px 0 0;
  background: linear-gradient(90deg, #fbfdfe, #d8e6ef 60%);
}
.panel-head {
  display: flex;
  flex: none;
  align-items: center;
  height: 29px;
  padding-left: 18px;
}
h2 {
  flex: 1;
  font: bold 12px/16px "Liberation Sans", Arial, sans-serif;
}
.drop {
  width: 13px;
  height: 20px;
  margin-right: 6px;
}
.drop:last-child {
  margin-right: 0;
}
.tree {
  flex: 1;
  padding: 1px 5px;
  border: 1px solid #8da9bb;
  border-radius: 4px;
  background: #fff;
  color: #333;
  font: 12px/18px "Open Sans", "Noto Sans", sans-serif;
}
.tree ul {
  padding-left: 6px;
  list-style: none;
}
.node {
  display: flex;
  align-items: center;
  gap: 5px;
  height: 18px;
}
.node.root {
  gap: 4px;
}
.guide {
  margin-right: -5px;
  fill: none;
  stroke: #999;
  stroke-dasharray: 1 1;
}
.sash {
  display: flex;
  flex-direction: column;
  align-items: flex-end;
  gap: 8px;
  padding-top: 202px;
  background: #d5e3ee;
}
.handle {
  width: 8px;
  height: 92px;
  box-sizing: border-box;
  border: 1px solid #8296a6;
  border-right: 0;
  border-radius: 4px 0 0 4px;
  background: #d5e6f0;
}
.handle.faint {
  height: 94px;
  border: 1px dotted #a9bccb;
  border-right: 0;
}
.handle i {
  width: 3px;
  height: 3px;
  border-radius: 50%;
  background: #333f49;
}
.canvas {
  flex: 1;
  min-width: 0;
}
.canvas > svg {
  display: block;
  width: 100%;
  height: 100%;
}
.axis-labels {
  fill: #5d4b48;
  font: 10px "Liberation Sans", Arial, sans-serif;
}
.watermark {
  fill: #eaf1f8;
  font: 53px "Liberation Serif", "Times New Roman", serif;
  filter: drop-shadow(1px 1px 0 #4b5560);
}
.watermark .han {
  font: 300 56px "Noto Sans CJK SC", sans-serif;
}
.feature-bars {
  display: flex;
  flex: none;
  width: 65px;
  overflow: hidden;
  background: #dceaf2;
}
.feature-bar {
  display: flex;
  flex: none;
  flex-direction: column;
  width: 41px;
}
.feature {
  display: flex;
  align-items: center;
  gap: 4px;
  height: 28px;
}
.hgrip {
  flex: none;
  height: 4px;
  margin: 5px 0;
  background: conic-gradient(#7389a0 25%, transparent 0) 0 0 / 2px 2px;
}
</style>
